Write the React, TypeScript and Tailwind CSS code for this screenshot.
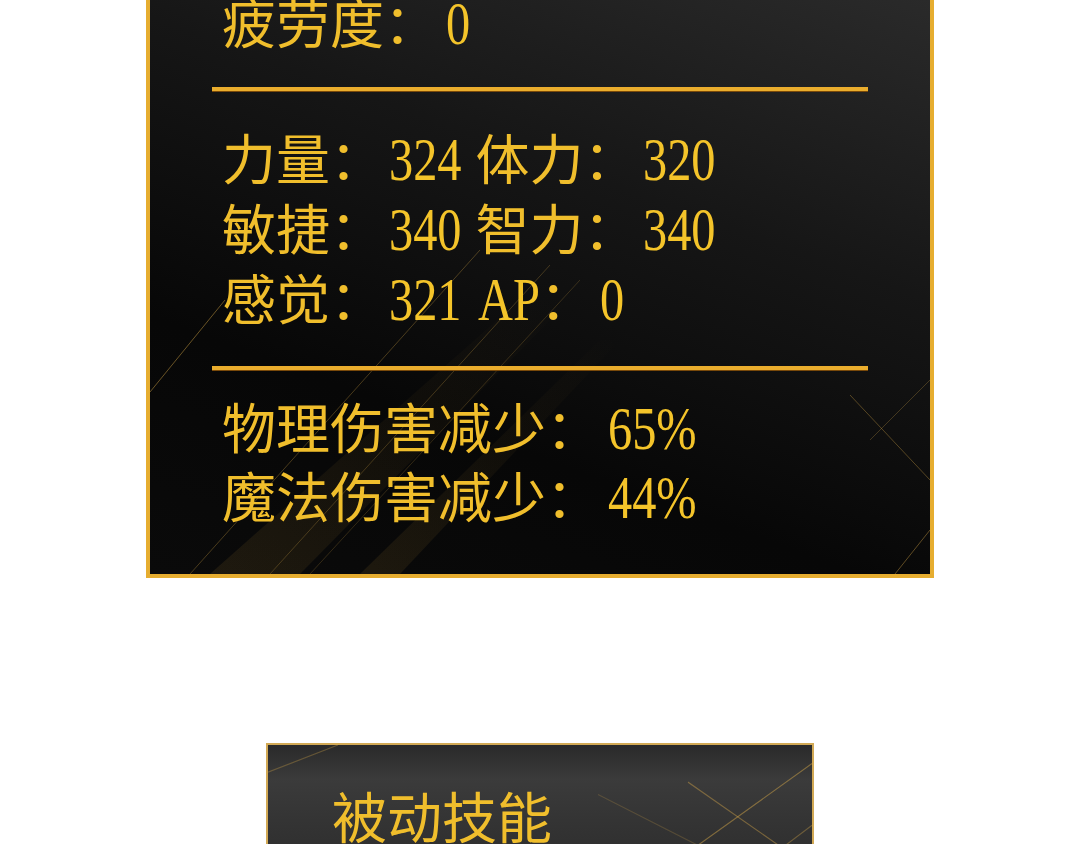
const gold = "text-[#f0be2c]";

function Num({ children, className }: { children: string; className: string }) {
    // digits are drawn narrow in the picture, so squeeze them and pull the gap back
    return (
        <span className={`inline-block origin-left scale-x-[0.78] text-[62px] leading-none text-[#f4c42a] ${className}`}>
            {children}
        </span>
    );
}

function Rule() {
    return <div className="h-[4px] bg-[#eaad2d] shadow-[0_1px_0_#7a4a0a]"></div>;
}

function StatusStreaks() {
    return (
        <svg className="absolute inset-0 w-full h-full pointer-events-none" viewBox="0 0 780 574" preserveAspectRatio="none">
            <defs>
                <linearGradient id="band" x1="0" y1="1" x2="1" y2="0">
                    <stop offset="0" stopColor="#d9a53a" stopOpacity="0.1" />
                    <stop offset="1" stopColor="#d9a53a" stopOpacity="0" />
                </linearGradient>
            </defs>
            <polygon points="60,574 150,574 420,300 370,300" fill="url(#band)" />
            <polygon points="210,574 250,574 470,340 450,340" fill="url(#band)" />
            <g stroke="#e0b04a" strokeWidth="1">
                <line x1="0" y1="392" x2="75" y2="300" strokeOpacity="0.45" />
                <line x1="40" y1="574" x2="330" y2="250" strokeOpacity="0.3" />
                <line x1="120" y1="574" x2="400" y2="265" strokeOpacity="0.25" />
                <line x1="160" y1="574" x2="430" y2="280" strokeOpacity="0.2" />
                <line x1="700" y1="395" x2="780" y2="480" strokeOpacity="0.35" />
                <line x1="720" y1="440" x2="780" y2="380" strokeOpacity="0.25" />
                <line x1="745" y1="574" x2="780" y2="530" strokeOpacity="0.4" />
            </g>
        </svg>
    );
}

function SkillStreaks() {
    return (
        <svg className="absolute inset-0 w-full h-full pointer-events-none" viewBox="0 0 544 110" preserveAspectRatio="none">
            <g stroke="#e0b04a" strokeWidth="1">
                <line x1="0" y1="22" x2="70" y2="0" strokeOpacity="0.3" />
                <line x1="380" y1="110" x2="544" y2="15" strokeOpacity="0.45" />
                <line x1="420" y1="30" x2="544" y2="100" strokeOpacity="0.4" />
                <line x1="470" y1="110" x2="544" y2="65" strokeOpacity="0.35" />
                <line x1="330" y1="40" x2="500" y2="110" strokeOpacity="0.2" />
            </g>
        </svg>
    );
}

export default function App() {
    const font = { fontFamily: '"Liberation Serif", "Noto Sans CJK SC", serif' };
    return (
        <div className="w-[1080px] h-[844px] bg-white overflow-hidden" style={font}>
            <div className="relative mx-auto w-[788px] h-[578px] border-x-4 border-b-4 border-[#e6ad30] bg-[linear-gradient(200deg,#2a2a2a_0%,#161616_35%,#070707_70%,#0a0a0a_100%)] overflow-hidden">
                <StatusStreaks />
                <div className={`relative px-[62px] text-[54px] ${gold}`}>
                    <p className="pl-[10px] leading-[70px] -mt-[9px]">
                        疲劳度：<Num className="ml-[8px] -mr-[7px]">0</Num>
                    </p>
                    <div className="mt-[26px]">
                        <Rule />
                    </div>
                    <div className="mt-[36px] pl-[10px] leading-[70px]">
                        <p>力量：<Num className="ml-[5px] -mr-[20px]">324</Num> 体力：<Num className="ml-[5px] -mr-[20px]">320</Num></p>
                        <p>敏捷：<Num className="ml-[5px] -mr-[20px]">340</Num> 智力：<Num className="ml-[5px] -mr-[20px]">340</Num></p>
                        <p>感觉：<Num className="ml-[5px] -mr-[20px]">321</Num> <Num className="ml-[2px] -mr-[17px]">AP</Num>：<Num className="ml-[6px] -mr-[7px]">0</Num></p>
                    </div>
                    <div className="mt-[29px]">
                        <Rule />
                    </div>
                    <div className="mt-[27px] pl-[10px] leading-[69px]">
                        <p>物理伤害减少：<Num className="ml-[8px] -mr-[25px]">65%</Num></p>
                        <p>魔法伤害减少：<Num className="ml-[8px] -mr-[25px]">44%</Num></p>
                    </div>
                </div>
            </div>

            <div className="relative mx-auto mt-[165px] w-[548px] h-[140px] border-2 border-[#d2a955] bg-[linear-gradient(180deg,#2a2a2a_0%,#3b3b3b_25%,#333333_60%,#2b2b2b_100%)] overflow-hidden">
                <SkillStreaks />
                <p className={`relative pl-[64px] pt-[40px] text-[55px] leading-[70px] ${gold}`}>被动技能</p>
            </div>
        </div>
    );
}
